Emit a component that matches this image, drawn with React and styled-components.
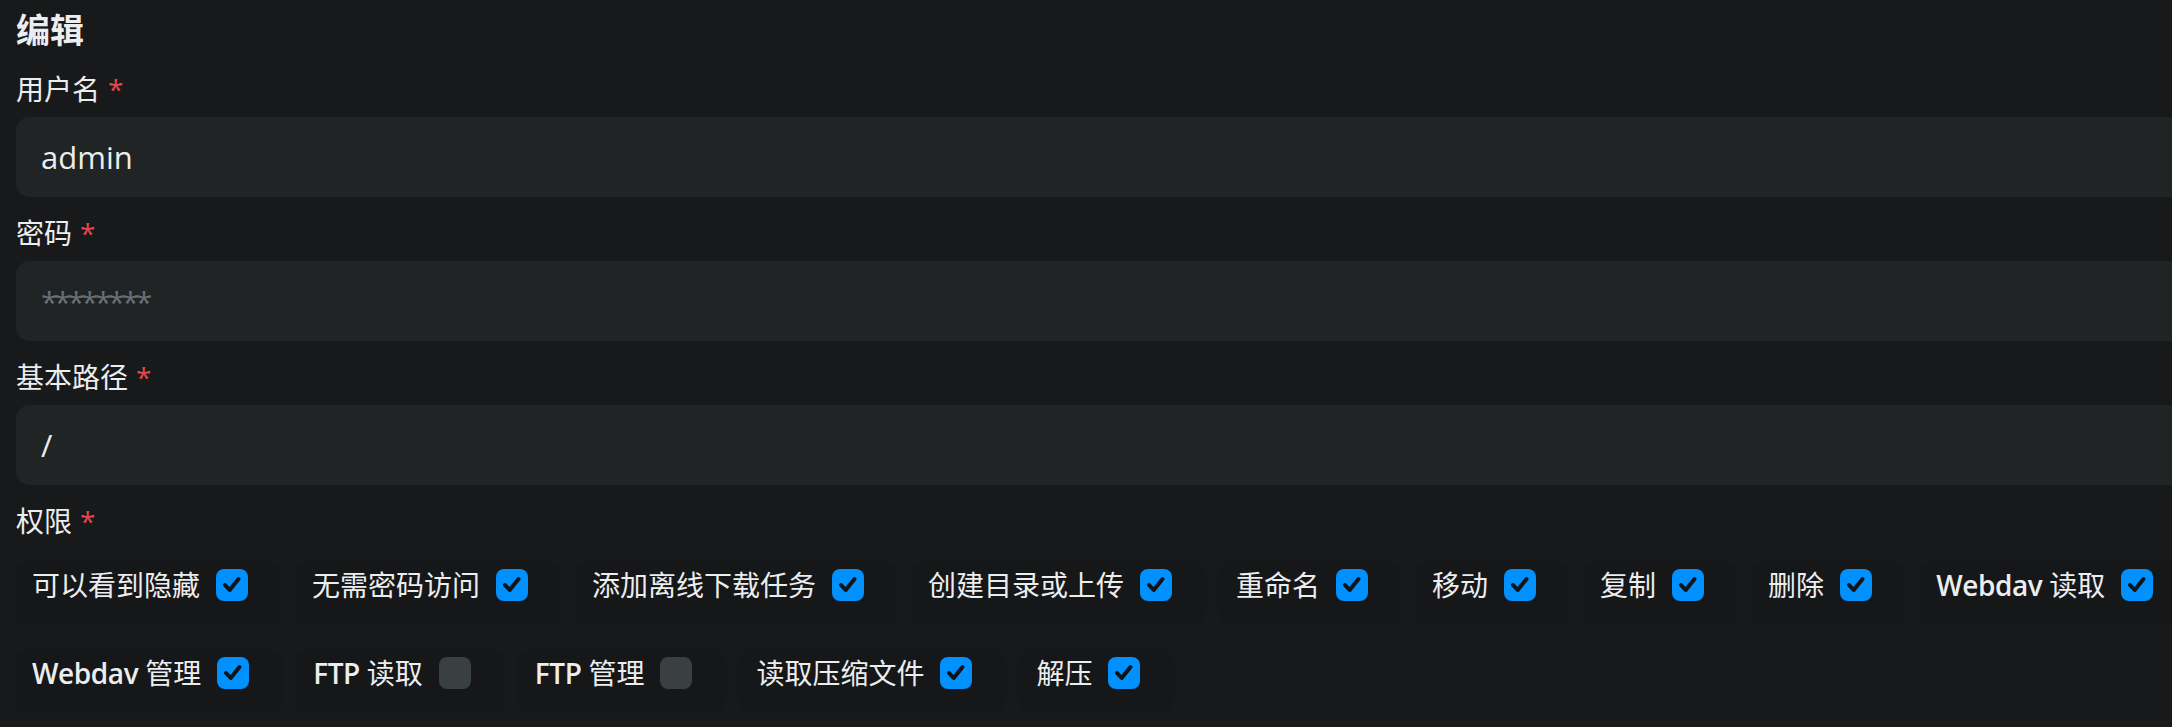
import React from "react";
import styled, { createGlobalStyle } from "styled-components";

const GlobalStyle = createGlobalStyle`
  html, body {
    margin: 0;
    padding: 0;
    background: #18191b;
    overflow: hidden;
  }
  body {
    font-family: "Open Sans", "Noto Sans CJK SC", sans-serif;
    color: #ecedee;
  }
  * { box-sizing: border-box; }
`;

const Page = styled.div`
  width: 2400px;
  padding: 8px 16px;
  display: flex;
  flex-direction: column;
  gap: 16px;
`;

const Title = styled.h2`
  margin: 0;
  font-size: 34px;
  line-height: 45px;
  font-weight: 700;
  color: #ecedee;
`;

const Field = styled.div`
  display: flex;
  flex-direction: column;
  gap: 8px;
`;

const Label = styled.label`
  font-size: 28px;
  line-height: 40px;
  color: #ecedee;
`;

const Required = styled.span`
  color: #e5484d;
  margin-left: 8px;
`;

const Input = styled.input`
  width: 100%;
  height: 80px;
  border: none;
  outline: none;
  border-radius: 14px;
  background: #202425;
  padding: 0 25px;
  font-family: "Open Sans", "Noto Sans CJK SC", sans-serif;
  font-size: 31px;
  color: #ecedee;
  &::placeholder {
    color: #697177;
    letter-spacing: -3px;
    font-size: 30px;
  }
`;

const Options = styled.div`
  display: flex;
  flex-wrap: wrap;
  gap: 28px 16px;
  padding-top: 13px;
`;

const Card = styled.div`
  display: flex;
  align-items: center;
  gap: 16px;
  padding: 7px 32px 21px 16px;
  border-radius: 12px;
  background: #161719;
  box-shadow: 0 2px 4px rgba(0, 0, 0, 0.1);
  font-size: 28px;
  line-height: 32px;
  color: #ecedee;
  white-space: nowrap;
`;

const Latin = styled.span`
  font-weight: 600;
  letter-spacing: -0.4px;
`;

const Box = styled.span`
  width: 32px;
  height: 32px;
  border-radius: 8px;
  background: ${(p) => (p.$checked ? "#0091ff" : "#3a3f42")};
  display: inline-flex;
  align-items: center;
  justify-content: center;
  flex-shrink: 0;
`;

const Check = () => (
  <svg width="32" height="32" viewBox="0 0 32 32" fill="none">
    <path
      d="M9 16 L13.7 21 L22.5 10"
      stroke="#111315"
      strokeWidth="4"
      strokeLinecap="round"
      strokeLinejoin="round"
    />
  </svg>
);

const perms = [
  { label: "可以看到隐藏", on: true },
  { label: "无需密码访问", on: true },
  { label: "添加离线下载任务", on: true },
  { label: "创建目录或上传", on: true },
  { label: "重命名", on: true },
  { label: "移动", on: true },
  { label: "复制", on: true },
  { label: "删除", on: true },
  { latin: "Webdav", label: "读取", on: true },
  { latin: "Webdav", label: "管理", on: true },
  { latin: "FTP", label: "读取", on: false },
  { latin: "FTP", label: "管理", on: false },
  { label: "读取压缩文件", on: true },
  { label: "解压", on: true },
];

export default function App() {
  return (
    <>
      <GlobalStyle />
      <Page>
        <Title>编辑</Title>
        <Field>
          <Label>
            用户名<Required>*</Required>
          </Label>
          <Input readOnly defaultValue="admin" />
        </Field>
        <Field>
          <Label>
            密码<Required>*</Required>
          </Label>
          <Input readOnly type="password" placeholder="********" />
        </Field>
        <Field>
          <Label>
            基本路径<Required>*</Required>
          </Label>
          <Input readOnly defaultValue="/" />
        </Field>
        <Field>
          <Label>
            权限<Required>*</Required>
          </Label>
          <Options>
            {perms.map((p, i) => (
              <Card key={i}>
                <span>
                  {p.latin && <Latin>{p.latin} </Latin>}
                  {p.label}
                </span>
                <Box $checked={p.on}>{p.on && <Check />}</Box>
              </Card>
            ))}
          </Options>
        </Field>
      </Page>
    </>
  );
}
